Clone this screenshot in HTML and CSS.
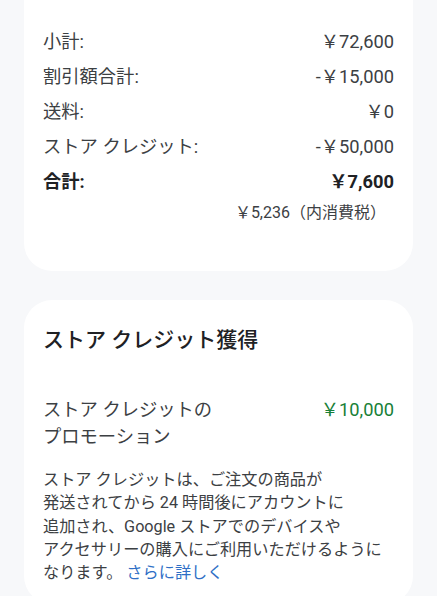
FILE: index.html
```html
<!DOCTYPE html>
<html lang="ja">
    <head>
        <meta charset="utf-8">
        <title>Order summary</title>
        <link rel="stylesheet" href="styles.css">
    </head>

    <body>
        <div class="page">

            <!-- Totals -->
            <section class="card totals">
                <div class="row">
                    <span>小計:</span>
                    <span>￥72,600</span>
                </div>
                <div class="row">
                    <span>割引額合計:</span>
                    <span>-￥15,000</span>
                </div>
                <div class="row">
                    <span>送料:</span>
                    <span>￥0</span>
                </div>
                <div class="row">
                    <span>ストア クレジット:</span>
                    <span>-￥50,000</span>
                </div>
                <div class="row total">
                    <span>合計:</span>
                    <span>￥7,600</span>
                </div>
                <div class="tax">￥5,236（内消費税）</div>
            </section>

            <!-- Store credit -->
            <section class="card credit">
                <h2>ストア クレジット獲得</h2>

                <div class="promo">
                    <span>ストア クレジットの<br>プロモーション</span>
                    <span class="amount">￥10,000</span>
                </div>

                <p class="note">
                    ストア クレジットは、ご注文の商品が<br>
                    発送されてから 24 時間後にアカウントに<br>
                    追加され、Google ストアでのデバイスや<br>
                    アクセサリーの購入にご利用いただけるように<br>
                    なります。 <a href="#">さらに詳しく</a>
                </p>
            </section>

        </div>
    </body>
</html>
```

FILE: styles.css
```css
body {
    margin: 0;
    background: #f7f8fa;
    color: #3c4043;
    font-family: Roboto, "Noto Sans CJK JP", sans-serif;
}

.page {
    display: flex;
    flex-direction: column;
    gap: 29px;
    padding: 0 24px;
}

.card {
    background: #fff;
    border-radius: 28px;
    padding: 0 19px 0 19px;
}

/* Totals */

.totals {
    border-top-left-radius: 0;
    border-top-right-radius: 0;
    padding-top: 24px;
    padding-bottom: 44px;
}

.row {
    display: flex;
    justify-content: space-between;
    font-size: 18.3px;
    line-height: 35px;
}

.row.total {
    font-weight: bold;
    color: #202124;
}

.tax {
    text-align: right;
    font-size: 16px;
    line-height: 28px;
    padding-right: 8px;
}

/* Store credit */

.credit {
    padding-top: 24px;
    padding-bottom: 20px;
}

.credit h2 {
    margin: 0;
    font-size: 21px;
    font-weight: 500;
    line-height: 32px;
    color: #202124;
}

.promo {
    display: flex;
    justify-content: space-between;
    align-items: flex-start;
    margin-top: 40px;
    font-size: 18.3px;
    line-height: 27px;
}

.promo .amount {
    color: #188038;
}

.note {
    margin: 18px 0 0;
    font-size: 16.2px;
    line-height: 23.3px;
}

.note a {
    color: #2f6fc6;
    text-decoration: none;
}
```
